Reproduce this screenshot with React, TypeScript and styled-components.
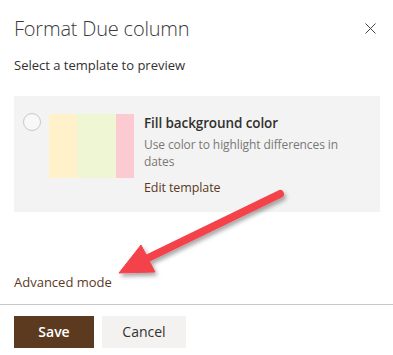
import { createGlobalStyle, styled } from 'styled-components'

const GlobalStyle = createGlobalStyle`
  html, body {
    margin: 0;
    padding: 0;
    background: #ffffff;
  }
  body {
    font-family: 'Open Sans', 'Noto Sans', sans-serif;
    color: #323130;
  }
`

const swatches = ['#fff1ca', '#eff6d3', '#fccbd2']
const swatchWidths = [28, 39, 18]

const App = () => {
  return (
    <>
      <GlobalStyle />
      <Panel>
        <Header>
          <Title>Format Due column</Title>
          <CloseButton aria-label="Close">
            <svg width="11" height="11" viewBox="0 0 11 11">
              <path d="M0.5 0.5 L10.5 10.5 M10.5 0.5 L0.5 10.5" stroke="#444" strokeWidth="1" fill="none" />
            </svg>
          </CloseButton>
        </Header>
        <Subtitle>Select a template to preview</Subtitle>
        <TemplateCard>
          <Radio />
          <Swatch>
            {swatches.map((c, i) => (
              <SwatchBand key={c} $color={c} $width={swatchWidths[i]} />
            ))}
          </Swatch>
          <TemplateInfo>
            <TemplateName>Fill background color</TemplateName>
            <TemplateDesc>Use color to highlight differences in dates</TemplateDesc>
            <TextLink>Edit template</TextLink>
          </TemplateInfo>
        </TemplateCard>
        <AdvancedLink>Advanced mode</AdvancedLink>
        <Divider />
        <Footer>
          <PrimaryButton>Save</PrimaryButton>
          <DefaultButton>Cancel</DefaultButton>
        </Footer>
        <Callout width="393" height="355" viewBox="0 0 393 355">
          <defs>
            <filter id="arrowShadow" x="-20%" y="-20%" width="140%" height="160%">
              <feDropShadow dx="2" dy="3" stdDeviation="2" floodColor="#000" floodOpacity="0.35" />
            </filter>
          </defs>
          <g filter="url(#arrowShadow)" fill="#f4434b" stroke="#f4434b">
            <line x1="280" y1="194" x2="146" y2="259" strokeWidth="8" strokeLinecap="round" />
            <polygon points="119,273 141,245 155,272" strokeWidth="1" strokeLinejoin="round" />
          </g>
        </Callout>
      </Panel>
    </>
  )
}

export default App

const Panel = styled.div`
  position: relative;
  width: 393px;
  height: 355px;
  overflow: hidden;
  display: flex;
  flex-direction: column;
`

const Header = styled.div`
  display: flex;
  justify-content: space-between;
  align-items: flex-start;
  padding: 15px 16px 0 14px;
`

const Title = styled.div`
  font-family: 'Open Sans Light', 'Open Sans', 'Noto Sans', sans-serif;
  font-size: 20px;
  font-weight: 300;
  line-height: 28px;
  letter-spacing: -0.2px;
  color: #3b3a39;
`

const CloseButton = styled.div`
  display: flex;
  margin-top: 8px;
  margin-right: 1px;
`

const Subtitle = styled.div`
  margin: 12px 14px 0;
  font-size: 13px;
  line-height: 20px;
  color: #323130;
`

const TemplateCard = styled.div`
  display: flex;
  align-items: flex-start;
  margin: 21px 13px 0 14px;
  padding: 17px 12px 17px 9px;
  background: #f3f3f3;
  height: 116px;
  box-sizing: border-box;
`

const Radio = styled.div`
  width: 18px;
  height: 18px;
  border: 1px solid #c8c8c8;
  border-radius: 50%;
  box-sizing: border-box;
  background: #f8f8f8;
  flex-shrink: 0;
`

const Swatch = styled.div`
  display: flex;
  height: 64px;
  margin: 1px 0 0 8px;
  flex-shrink: 0;
`

const SwatchBand = styled.div<{ $color: string; $width: number }>`
  width: ${(p) => p.$width}px;
  background: ${(p) => p.$color};
`

const TemplateInfo = styled.div`
  display: flex;
  flex-direction: column;
  margin-left: 10px;
  max-width: 196px;
`

const TemplateName = styled.div`
  font-size: 13.5px;
  font-weight: 600;
  line-height: 20px;
  letter-spacing: -0.1px;
  color: #323130;
`

const TemplateDesc = styled.div`
  margin-top: 3px;
  font-size: 12px;
  line-height: 17px;
  letter-spacing: -0.1px;
  color: #7a7876;
`

const TextLink = styled.div`
  margin-top: 8px;
  font-size: 12.5px;
  line-height: 20px;
  letter-spacing: -0.1px;
  color: #5b3a1f;
`

const AdvancedLink = styled(TextLink)`
  margin: 60px 14px 0;
  font-size: 13px;
  letter-spacing: 0;
`

const Divider = styled.div`
  margin-top: 12px;
  height: 1px;
  background: #c8c8c8;
`

const Footer = styled.div`
  display: flex;
  gap: 8px;
  padding: 11px 14px 0;
`

const ButtonBase = styled.button`
  height: 32px;
  min-width: 80px;
  padding: 0 16px;
  border: none;
  border-radius: 0;
  font-family: 'Open Sans', 'Noto Sans', sans-serif;
  font-size: 14px;
  line-height: 20px;
  cursor: pointer;
`

const PrimaryButton = styled(ButtonBase)`
  background: #5c3a1f;
  color: #ffffff;
  font-weight: 600;
`

const DefaultButton = styled(ButtonBase)`
  width: 84px;
  background: #f3f2f1;
  color: #323130;
`

const Callout = styled.svg`
  position: absolute;
  left: 0;
  top: 0;
  pointer-events: none;
`
